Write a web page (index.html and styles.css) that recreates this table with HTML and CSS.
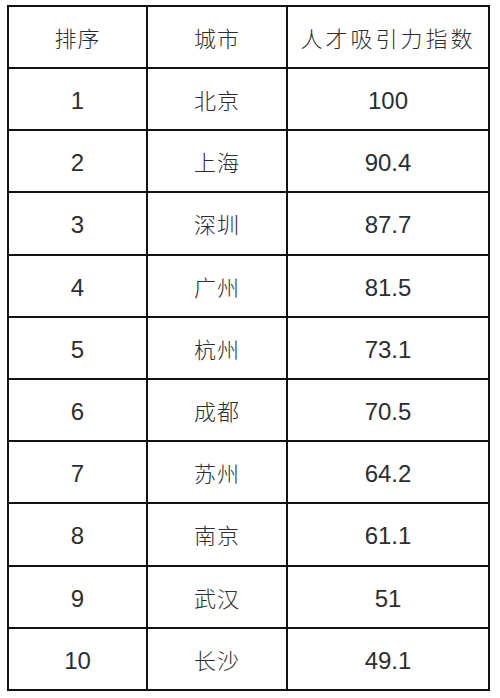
FILE: index.html
```html
<!DOCTYPE html>
<html lang="zh-CN">
<head>
<meta charset="utf-8">
<link rel="stylesheet" href="styles.css">
</head>
<body>
<div class="table">
  <div class="cell zh">排序</div><div class="cell zh">城市</div><div class="cell zh wide">人才吸引力指数</div>
  <div class="cell num">1</div><div class="cell zh">北京</div><div class="cell num">100</div>
  <div class="cell num">2</div><div class="cell zh">上海</div><div class="cell num">90.4</div>
  <div class="cell num">3</div><div class="cell zh">深圳</div><div class="cell num">87.7</div>
  <div class="cell num">4</div><div class="cell zh">广州</div><div class="cell num">81.5</div>
  <div class="cell num">5</div><div class="cell zh">杭州</div><div class="cell num">73.1</div>
  <div class="cell num">6</div><div class="cell zh">成都</div><div class="cell num">70.5</div>
  <div class="cell num">7</div><div class="cell zh">苏州</div><div class="cell num">64.2</div>
  <div class="cell num">8</div><div class="cell zh">南京</div><div class="cell num">61.1</div>
  <div class="cell num">9</div><div class="cell zh">武汉</div><div class="cell num">51</div>
  <div class="cell num">10</div><div class="cell zh">长沙</div><div class="cell num">49.1</div>
</div>
</body>
</html>
```
FILE: styles.css
```css
html, body {
  margin: 0;
  padding: 0;
  background: #ffffff;
}
body {
  padding: 5px 0 0 7px;
}
.table {
  display: grid;
  grid-template-columns: 137px 138px 200px;
  grid-template-rows: 60px;
  grid-auto-rows: 60.2px;
  gap: 2px;
  padding: 2px;
  width: 479px;
  background: #111111;
}
.cell {
  background: #ffffff;
  display: flex;
  align-items: center;
  justify-content: center;
  color: #2e2e2e;
}
.zh {
  font-family: "Noto Sans CJK SC", sans-serif;
  font-size: 22px;
  font-weight: 300;
  letter-spacing: 1px;
}
.wide {
  letter-spacing: 3px;
}
.num {
  font-family: "Liberation Sans", Arial, sans-serif;
  font-size: 24px;
  padding-top: 4px;
}
```
